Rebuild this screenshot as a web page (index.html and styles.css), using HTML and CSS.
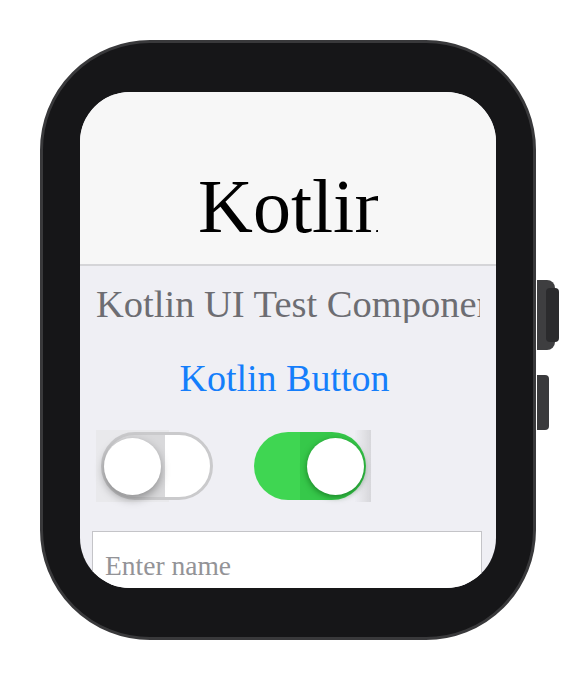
FILE: index.html
```html
<!DOCTYPE html>
<html lang="en">
<head>
<meta charset="utf-8">
<title>Kotlin Watch UI</title>
<link rel="stylesheet" href="styles.css">
</head>
<body>
<div class="stage">
  <div class="watch">
    <div class="screen">
      <header class="header">
        <div class="title">Kotlin</div>
      </header>
      <main class="content">
        <div class="subtitle">Kotlin UI Test Components</div>
        <div class="button">Kotlin Button</div>
        <div class="switches">
          <div class="switch off">
            <div class="track"><div class="knob"></div></div>
          </div>
          <div class="switch on">
            <div class="track"><div class="knob"></div></div>
          </div>
        </div>
        <input class="field" type="text" placeholder="Enter name">
      </main>
    </div>
  </div>
  <div class="side">
    <div class="crown"><div class="crown-inner"></div></div>
    <div class="side-button"></div>
  </div>
</div>
</body>
</html>
```
FILE: styles.css
```css
html, body {
  margin: 0;
  background: #ffffff;
}

.stage {
  display: flex;
  align-items: flex-start;
  padding: 40px 0 0 40px;
}

.watch {
  box-sizing: border-box;
  width: 496px;
  height: 600px;
  border: 3px solid #39393b;
  background: #161618;
  border-radius: 110px;
  padding: 49px 37px;
  flex-shrink: 0;
}

.screen {
  width: 416px;
  height: 496px;
  border-radius: 50px;
  overflow: hidden;
  background: #efeff4;
  display: flex;
  flex-direction: column;
}

.header {
  box-sizing: border-box;
  height: 174px;
  flex-shrink: 0;
  background: #f7f7f7;
  border-bottom: 2px solid #d5d5d8;
  padding-top: 76px;
}

.title {
  width: 180px;
  margin: 0 auto;
  overflow: hidden;
  white-space: nowrap;
  font-family: "Liberation Serif", "Times New Roman", serif;
  font-size: 76px;
  line-height: 76px;
  color: #000;
}

.content {
  display: flex;
  flex-direction: column;
  padding: 0 16px;
}

.subtitle {
  margin-top: 19px;
  overflow: hidden;
  white-space: nowrap;
  font-family: "Liberation Serif", "Times New Roman", serif;
  font-size: 38.5px;
  line-height: 38px;
  color: #6d6d72;
}

.button {
  margin-top: 36px;
  padding-right: 7px;
  text-align: center;
  white-space: nowrap;
  font-family: "Liberation Serif", "Times New Roman", serif;
  font-size: 38px;
  line-height: 38px;
  color: #157efb;
}

.switches {
  display: flex;
  gap: 41px;
  margin-top: 33px;
}

.switch {
  width: 117px;
  height: 72px;
  display: flex;
  align-items: center;
  filter: blur(0.7px);
}

.switch.off {
  justify-content: flex-end;
  background: linear-gradient(90deg, #e9e9ec 0 62%, transparent 62%);
}

.switch.on {
  justify-content: flex-start;
  background: linear-gradient(90deg, transparent 0 86%, #d6d6da 100%);
}

.track {
  box-sizing: border-box;
  width: 112px;
  height: 68px;
  border-radius: 34px;
  display: flex;
  align-items: center;
  padding: 0 2px;
}

.off .track {
  border: 3px solid #cacacc;
  background: linear-gradient(90deg, #d9d9db 0 58%, #ffffff 58%);
  justify-content: flex-start;
  padding: 0;
}

.on .track {
  background: linear-gradient(90deg, #3fd652 0 41%, #36c84a 41%);
  justify-content: flex-end;
}

.knob {
  width: 57px;
  height: 57px;
  border-radius: 50%;
  background: #ffffff;
  flex-shrink: 0;
}

.off .knob {
  box-shadow: 0 4px 10px rgba(0, 0, 0, 0.35);
}

.on .knob {
  box-shadow: 0 2px 6px rgba(0, 70, 10, 0.55);
}

.field {
  box-sizing: content-box;
  margin: 29px -2px 0 -4px;
  height: 28px;
  padding: 20px 12px 32px;
  border: 1px solid #c4c4c8;
  border-radius: 0;
  background: #ffffff;
  font-family: "Liberation Serif", "Times New Roman", serif;
  font-size: 27.5px;
  line-height: 28px;
  color: #000;
  outline: none;
}

.field::placeholder {
  color: #939397;
  opacity: 1;
}

.side {
  display: flex;
  flex-direction: column;
  margin-left: 1px;
  padding-top: 240px;
  gap: 25px;
}

.crown {
  width: 18px;
  height: 70px;
  background: #3e3e40;
  border-radius: 0 8px 8px 0;
  display: flex;
  align-items: center;
}

.crown-inner {
  flex-shrink: 0;
  width: 13px;
  height: 54px;
  margin-left: 9px;
  background: #2b2b2d;
  border-radius: 4px;
}

.side-button {
  width: 12px;
  height: 55px;
  background: #3a3a3c;
  border-radius: 0 4px 4px 0;
}
```
